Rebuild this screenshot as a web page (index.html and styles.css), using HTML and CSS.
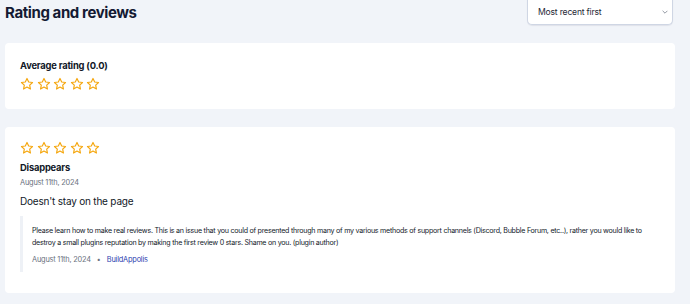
FILE: index.html
```html
<!DOCTYPE html>
<html lang="en">
<head>
    <meta charset="UTF-8">
    <meta name="viewport" content="width=device-width, initial-scale=1.0">
    <title>Rating and reviews</title>
    <link rel="stylesheet" href="styles.css">
</head>
<body>
    <div class="page">
        <div class="header">
            <h2>Rating and reviews</h2>
            <div class="sort">
                <span>Most recent first</span>
                <svg class="chevron" viewBox="0 0 10 6" width="6" height="4"><path d="M1 1l4 4 4-4" fill="none" stroke="#6b7280" stroke-width="1.2"/></svg>
            </div>
        </div>

        <div class="card summary">
            <div class="summary-title">Average rating (0.0)</div>
            <div class="stars">
                <svg viewBox="0 0 24 24"><path d="M12 2.5l2.9 6.1 6.6.8-4.9 4.6 1.3 6.6L12 17.3l-5.9 3.3 1.3-6.6-4.9-4.6 6.6-.8z"/></svg>
                <svg viewBox="0 0 24 24"><path d="M12 2.5l2.9 6.1 6.6.8-4.9 4.6 1.3 6.6L12 17.3l-5.9 3.3 1.3-6.6-4.9-4.6 6.6-.8z"/></svg>
                <svg viewBox="0 0 24 24"><path d="M12 2.5l2.9 6.1 6.6.8-4.9 4.6 1.3 6.6L12 17.3l-5.9 3.3 1.3-6.6-4.9-4.6 6.6-.8z"/></svg>
                <svg viewBox="0 0 24 24"><path d="M12 2.5l2.9 6.1 6.6.8-4.9 4.6 1.3 6.6L12 17.3l-5.9 3.3 1.3-6.6-4.9-4.6 6.6-.8z"/></svg>
                <svg viewBox="0 0 24 24"><path d="M12 2.5l2.9 6.1 6.6.8-4.9 4.6 1.3 6.6L12 17.3l-5.9 3.3 1.3-6.6-4.9-4.6 6.6-.8z"/></svg>
            </div>
        </div>

        <div class="card review">
            <div class="stars">
                <svg viewBox="0 0 24 24"><path d="M12 2.5l2.9 6.1 6.6.8-4.9 4.6 1.3 6.6L12 17.3l-5.9 3.3 1.3-6.6-4.9-4.6 6.6-.8z"/></svg>
                <svg viewBox="0 0 24 24"><path d="M12 2.5l2.9 6.1 6.6.8-4.9 4.6 1.3 6.6L12 17.3l-5.9 3.3 1.3-6.6-4.9-4.6 6.6-.8z"/></svg>
                <svg viewBox="0 0 24 24"><path d="M12 2.5l2.9 6.1 6.6.8-4.9 4.6 1.3 6.6L12 17.3l-5.9 3.3 1.3-6.6-4.9-4.6 6.6-.8z"/></svg>
                <svg viewBox="0 0 24 24"><path d="M12 2.5l2.9 6.1 6.6.8-4.9 4.6 1.3 6.6L12 17.3l-5.9 3.3 1.3-6.6-4.9-4.6 6.6-.8z"/></svg>
                <svg viewBox="0 0 24 24"><path d="M12 2.5l2.9 6.1 6.6.8-4.9 4.6 1.3 6.6L12 17.3l-5.9 3.3 1.3-6.6-4.9-4.6 6.6-.8z"/></svg>
            </div>
            <div class="review-title">Disappears</div>
            <div class="review-date">August 11th, 2024</div>
            <p class="review-body">Doesn't stay on the page</p>
            <div class="reply">
                <p>Please learn how to make real reviews. This is an issue that you could of presented through many of my various methods of support channels (Discord, Bubble Forum, etc..), rather you would like to destroy a small plugins reputation by making the first review 0 stars. Shame on you. (plugin author)</p>
                <div class="reply-meta">
                    <span class="review-date">August 11th, 2024</span>
                    <span class="dot">•</span>
                    <a href="#" class="author">BuildAppolis</a>
                </div>
            </div>
        </div>
    </div>
</body>
</html>
```

FILE: styles.css
```css
body {
    margin: 0;
    background-color: #f1f4f9;
    font-family: Inter, "Liberation Sans", sans-serif;
    color: #111827;
}
.page {
    width: 670px;
    padding: 0 15px 0 5px;
}
.header {
    display: flex;
    justify-content: space-between;
    align-items: flex-start;
    height: 43px;
}
.header h2 {
    margin: 3px 0 0;
    font-size: 15px;
    font-weight: 700;
    letter-spacing: -0.4px;
    color: #141a33;
}
.sort {
    display: flex;
    align-items: center;
    justify-content: space-between;
    box-sizing: content-box;
    width: 130px;
    height: 24px;
    margin: -9px 2px 0 0;
    padding: 9px 4px 0 10px;
    background-color: #fff;
    border: 1px solid #cfd6e4;
    border-top: none;
    border-radius: 0 0 5px 5px;
    box-shadow: 0 1px 1px rgba(20, 30, 60, 0.08);
    font-size: 8.6px;
    letter-spacing: -0.2px;
    color: #1f2937;
}
.card {
    background-color: #fff;
    border-radius: 4px;
    padding: 15px;
}
.summary {
    height: 34px;
    padding-top: 17px;
    margin-bottom: 18px;
}
.summary-title {
    font-size: 9.4px;
    font-weight: 700;
    letter-spacing: -0.2px;
    margin-bottom: 6px;
}
.stars {
    display: flex;
    gap: 2.5px;
}
.stars svg {
    width: 14px;
    height: 14px;
    fill: none;
    stroke: #f5a70f;
    stroke-width: 2;
    stroke-linejoin: round;
}
.review {
    padding-top: 14px;
    padding-bottom: 21px;
}
.review-title {
    margin-top: 7px;
    font-size: 9.4px;
    font-weight: 700;
    letter-spacing: -0.2px;
}
.review-date {
    margin-top: 5px;
    font-size: 7.4px;
    color: #6b7280;
    letter-spacing: -0.2px;
}
.review-body {
    margin: 8px 0 9px;
    font-size: 10px;
    letter-spacing: -0.2px;
}
.reply {
    border-left: 3px solid #eef1f6;
    padding: 9px 3px 8px 9px;
}
.reply p {
    margin: 0;
    font-size: 7.1px;
    line-height: 12px;
    letter-spacing: -0.25px;
    color: #111827;
}
.reply-meta {
    display: flex;
    align-items: center;
    gap: 6px;
    margin-top: 6px;
}
.reply-meta .review-date {
    margin: 0;
}
.dot {
    font-size: 7px;
    color: #6b7280;
}
.author {
    font-size: 7.4px;
    color: #2f3fb0;
    text-decoration: none;
    letter-spacing: -0.2px;
}
```
